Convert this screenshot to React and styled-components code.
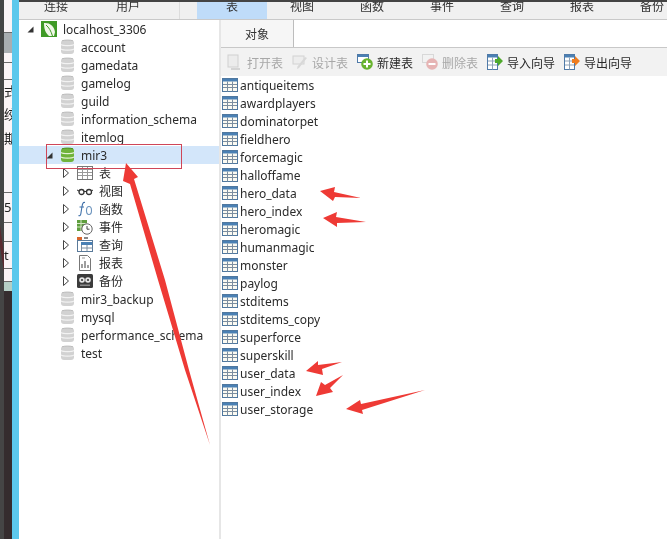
import React from 'react';
import styled, { createGlobalStyle } from 'styled-components';

const GlobalStyle = createGlobalStyle`
  html, body {
    margin: 0;
    padding: 0;
    background: #fff;
  }
  body {
    font-family: "Noto Sans", "Noto Sans CJK SC", sans-serif;
    font-size: 12px;
    color: #222;
  }
`;

/* the source is a soft, compressed screenshot */
const Page = styled.div`
  position: relative;
  display: flex;
  width: 667px;
  height: 539px;
  overflow: hidden;
  background: #fff;
  filter: blur(0.3px);
`;

const DarkEdge = styled.div`
  width: 4px;
  background: #454545;
`;

const BehindWindow = styled.div`
  display: flex;
  flex-direction: column;
  width: 8px;
  overflow: hidden;
  background: #fbf4f6;
`;

const BehindRow = styled.div`
  flex: ${p => (p.$fill ? 1 : 'none')};
  height: ${p => (p.$h ? `${p.$h}px` : 'auto')};
  background: ${p => p.$bg || 'transparent'};
  border-bottom: ${p => (p.$line ? '1px solid #6a6a6a' : 'none')};
  font-size: 13px;
  line-height: ${p => (p.$h ? `${p.$h}px` : 'normal')};
  white-space: nowrap;
  color: #222;
`;

const BlueEdge = styled.div`
  width: 7px;
  background: #5cc8ec;
`;

const Content = styled.div`
  flex: 1;
  display: flex;
  flex-direction: column;
  min-width: 0;
`;

const TopStrip = styled.div`
  height: 2px;
  background: #444;
`;

const MenuBar = styled.div`
  display: flex;
  height: 18px;
  overflow: hidden;
  background: #f0f0f0;
  border-bottom: 1px solid #c9c9c9;
  box-sizing: border-box;
`;

const MenuButton = styled.div`
  width: ${p => p.$w || 70}px;
  flex: none;
  text-align: center;
  line-height: 8px;
  font-family: "Noto Sans CJK SC", sans-serif;
  color: #333;
  background: ${p => (p.$active ? '#bfdcf9' : 'transparent')};
`;

const MenuGap = styled.div`
  width: 17px;
  flex: none;
  margin-right: 17px;
  border-right: 1px solid #dcdcdc;
  box-sizing: border-box;
`;

const Body = styled.div`
  flex: 1;
  display: flex;
  min-height: 0;
`;

const Tree = styled.div`
  width: 200px;
  flex: none;
`;

const TreeRow = styled.div`
  display: flex;
  align-items: center;
  height: 18px;
  padding-left: ${p => p.$pad}px;
  background: ${p => (p.$selected ? '#d3e6fa' : 'transparent')};
  font-family: "Noto Sans", "Noto Sans CJK SC", sans-serif;
  font-size: 12px;
  color: #2b2b2b;
  white-space: nowrap;
`;

const Twisty = styled.span`
  display: flex;
  align-items: center;
  width: 14px;
  flex: none;
`;

const RowLabel = styled.span`
  margin-left: 6px;
`;

const Divider = styled.div`
  width: 2px;
  flex: none;
  background: #e6e6e6;
`;

const RightPane = styled.div`
  flex: 1;
  display: flex;
  flex-direction: column;
  min-width: 0;
`;

const TabStrip = styled.div`
  display: flex;
  height: 28px;
  flex: none;
  box-sizing: border-box;
  border-bottom: 1px solid #c8c8c8;
`;

const Tab = styled.div`
  width: 72px;
  display: flex;
  align-items: center;
  justify-content: center;
  background: #f6f6f6;
  border-right: 1px solid #bdbdbd;
  font-family: "Noto Sans CJK SC", sans-serif;
  color: #333;
`;

const ToolBar = styled.div`
  display: flex;
  align-items: center;
  height: 28px;
  flex: none;
  padding-left: 5px;
  background: #f2f2f2;
`;

const ToolButton = styled.div`
  display: flex;
  align-items: center;
  gap: ${p => p.$gap || 4}px;
  margin-right: 9px;
  font-family: "Noto Sans CJK SC", sans-serif;
  color: ${p => (p.$disabled ? '#a8a8a8' : '#2a2a2a')};
  white-space: nowrap;
`;

const TableList = styled.div`
  display: flex;
  flex-direction: column;
`;

const TableRow = styled.div`
  display: flex;
  align-items: center;
  gap: 2px;
  height: 18px;
  padding-left: 1px;
  color: #2b2b2b;
  white-space: nowrap;
`;

const Annotations = styled.svg`
  position: absolute;
  left: 0;
  top: 0;
  pointer-events: none;
`;

const HighlightBox = styled.div`
  position: absolute;
  left: 46px;
  top: 144px;
  width: 134px;
  height: 23px;
  border: 1px solid #cf4658;
`;

const DbIcon = ({ green }) => {
  const c = green ? '#6fb33a' : '#d2d2d2';
  const d = green ? '#4c8c24' : '#bdbdbd';
  return (
    <svg width="15" height="16" viewBox="0 0 15 16">
      <rect x="1" y="1" width="13" height="14" rx="3" fill={c} />
      <path d="M1 5.5c2 1.4 11 1.4 13 0M1 10c2 1.4 11 1.4 13 0" stroke={green ? '#e4f2d4' : '#f2f2f2'} strokeWidth="1.3" fill="none" />
      <path d="M2 1.8c3-1 8-1 11 0" stroke={d} fill="none" />
    </svg>
  );
};

const ServerIcon = () => (
  <svg width="16" height="16" viewBox="0 0 16 16">
    <rect width="16" height="16" fill="#3f9a26" />
    <path d="M3 2c6-.5 10 3 11 9l-1 4H8C4.5 12 3 8 3 2z" fill="#f1f7e8" />
    <path d="M5 4c3 2.5 5 6 6.500 11" stroke="#3f9a26" fill="none" />
  </svg>
);

const TableIcon = () => (
  <svg width="16" height="16" viewBox="0 0 16 16">
    <rect x=".5" y="1.5" width="15" height="13" fill="#fbfaf2" stroke="#50789f" />
    <rect x="1" y="2" width="14" height="2.5" fill="#4a80b4" />
    <path d="M1 7.5h14M1 10.5h14M5.5 4.5v10M10.5 4.5v10" stroke="#7c8ea0" fill="none" />
  </svg>
);

const GridIcon = () => (
  <svg width="16" height="16" viewBox="0 0 16 16">
    <rect x=".5" y="1.5" width="15" height="13" fill="#fff" stroke="#777" />
    <path d="M1 4.5h14M1 7.5h14M1 10.5h14M5.5 2v12M10.5 2v12" stroke="#999" fill="none" />
  </svg>
);

const GlassesIcon = () => (
  <svg width="16" height="16" viewBox="0 0 16 16">
    <circle cx="4.500" cy="9" r="2.500" fill="none" stroke="#333" strokeWidth="1.3" />
    <circle cx="12" cy="9" r="2.500" fill="none" stroke="#333" strokeWidth="1.3" />
    <path d="M7 8.500h2.500M2 8L0 7M14.500 8L16 7" stroke="#333" />
  </svg>
);

const FunctionIcon = () => (
  <svg width="16" height="16" viewBox="0 0 16 16">
    <path d="M8 1.500C6 1 5.500 2.500 5 5.500L3.800 13c-.3 1.500-1.200 2-2.300 1.500M2.500 6H7" stroke="#3d6fa8" strokeWidth="1.1" fill="none" />
    <ellipse cx="12" cy="9.500" rx="2.500" ry="4" fill="none" stroke="#6b93bd" strokeWidth="1.1" />
  </svg>
);

const EventIcon = () => (
  <svg width="16" height="16" viewBox="0 0 16 16">
    <rect x="0" y="1" width="10" height="11" fill="#5f9e3e" />
    <path d="M0 4.500h10M0 8h10M4 1v11" stroke="#d7e8c8" fill="none" />
    <circle cx="10" cy="10" r="5.200" fill="#fff" stroke="#666" />
    <path d="M10 7v3.200h2.500" stroke="#444" fill="none" />
  </svg>
);

const QueryIcon = () => (
  <svg width="16" height="16" viewBox="0 0 16 16">
    <rect x=".5" y="3.5" width="15" height="11" fill="#fff" stroke="#5a7a9a" />
    <rect x="4" y="5" width="11" height="3" fill="#4a80b4" />
    <path d="M4.500 8v6M10 8v6M4.500 11h11" stroke="#7c8ea0" fill="none" />
    <rect x="0" y="0" width="5" height="3" fill="#d9662b" />
    <rect x="7" y="0" width="4" height="2" fill="#888" />
  </svg>
);

const ReportIcon = () => (
  <svg width="16" height="16" viewBox="0 0 16 16">
    <path d="M2.500.5h8l3 3v12h-11z" fill="#fff" stroke="#777" />
    <path d="M5 13V9M8 13V6M11 13v-3" stroke="#777" strokeWidth="1.4" />
    <path d="M5 3h3" stroke="#999" />
  </svg>
);

const BackupIcon = () => (
  <svg width="16" height="16" viewBox="0 0 16 16">
    <rect x="0" y="1" width="16" height="14" rx="1.500" fill="#3b3b3b" />
    <circle cx="5" cy="7" r="2.800" fill="#e6e6e6" />
    <circle cx="11" cy="7" r="2.800" fill="#e6e6e6" />
    <circle cx="5" cy="7" r="1.100" fill="#3b3b3b" />
    <circle cx="11" cy="7" r="1.100" fill="#3b3b3b" />
    <rect x="3" y="11.500" width="10" height="1.500" fill="#8a8a8a" />
  </svg>
);

const OpenIcon = () => (
  <svg width="16" height="16" viewBox="0 0 16 16">
    <rect x="2" y="1" width="10" height="12" fill="#ececec" stroke="#d0d0d0" />
    <path d="M5 15h9" stroke="#d4d4d4" strokeWidth="2" />
  </svg>
);

const DesignIcon = () => (
  <svg width="16" height="16" viewBox="0 0 16 16">
    <rect x="1" y="2" width="11" height="8" fill="#ededed" stroke="#d2d2d2" />
    <path d="M15 4L7 14l-2 1 .5-2.500L13 3z" fill="#d8d8d8" />
  </svg>
);

const NewIcon = () => (
  <svg width="16" height="16" viewBox="0 0 16 16">
    <rect x=".5" y=".5" width="11" height="8" fill="#fff" stroke="#4f7aa8" />
    <rect x="1" y="1" width="10" height="2" fill="#4a80b4" />
    <circle cx="10" cy="10" r="5.800" fill="#68b32e" />
    <path d="M10 6.500v7M6.500 10h7" stroke="#fff" strokeWidth="2" />
  </svg>
);

const RemoveIcon = () => (
  <svg width="16" height="16" viewBox="0 0 16 16">
    <rect x=".5" y=".5" width="11" height="8" fill="#f2f2f2" stroke="#d8d8d8" />
    <circle cx="10" cy="10" r="5.800" fill="#e6b4b4" />
    <path d="M6.500 10h7" stroke="#fff" strokeWidth="2" />
  </svg>
);

const WizardIcon = ({ color }) => (
  <svg width="16" height="18" viewBox="0 0 16 18">
    <rect x=".5" y="1.500" width="10" height="15" fill="#fff" stroke="#4f7aa8" />
    <rect x="1" y="2" width="9" height="2.500" fill="#4a80b4" />
    <path d="M1 8h9M1 12h9M5.500 4.500v12" stroke="#8fa3b8" fill="none" />
    <path d="M8 6h3V3l5 5-5 5v-3H8z" fill={color} />
  </svg>
);

const TriangleOpen = () => (
  <svg width="7" height="7" viewBox="0 0 7 7">
    <path d="M6.500.5v6h-6z" fill="#333" />
  </svg>
);

const TriangleClosed = () => (
  <svg width="6" height="10" viewBox="0 0 6 10">
    <path d="M.5.5l5 4.500-5 4.500z" fill="#fff" stroke="#444" />
  </svg>
);

const databasesTop = ['account', 'gamedata', 'gamelog', 'guild', 'information_schema', 'itemlog'];
const databasesBottom = ['mir3_backup', 'mysql', 'performance_schema', 'test'];

const children = [
  ['表', <GridIcon />],
  ['视图', <GlassesIcon />],
  ['函数', <FunctionIcon />],
  ['事件', <EventIcon />],
  ['查询', <QueryIcon />],
  ['报表', <ReportIcon />],
  ['备份', <BackupIcon />],
];

const tables = [
  'antiqueitems', 'awardplayers', 'dominatorpet', 'fieldhero', 'forcemagic', 'halloffame',
  'hero_data', 'hero_index', 'heromagic', 'humanmagic', 'monster', 'paylog', 'stditems',
  'stditems_copy', 'superforce', 'superskill', 'user_data', 'user_index', 'user_storage',
];

const arrows = [
  '126,163 138,177 134,179 165,280 189,370 210,445 185,370 158,280 130,184 123,181',
  '320,191 335,187 334,192 361,198 335,197 333,201',
  '323,218 337,212 336,217 366,222 337,223 337,227',
  '306,371 318,361 318,365 342,362 322,369 323,375',
  '316,396 321,382 325,385 343,375 330,388 333,392',
  '346,409 360,400 361,404 425,390 362,410 363,414',
];

const App = () => (
  <Page>
    <GlobalStyle />
    <DarkEdge />
    <BehindWindow>
      <BehindRow $h={32} $line />
      <BehindRow $h={20} $bg="#a9adb0" />
      <BehindRow $h={9} $line />
      <BehindRow $h={16} $line />
      <BehindRow $h={22}>式</BehindRow>
      <BehindRow $h={24}>绞</BehindRow>
      <BehindRow $h={24}>期</BehindRow>
      <BehindRow $h={42} $line />
      <BehindRow $h={29} $line>5(</BehindRow>
      <BehindRow $h={18} $line />
      <BehindRow $h={26} $line>t</BehindRow>
      <BehindRow $h={12} $line />
      <BehindRow $h={9} $bg="#b5cfc6" />
      <BehindRow $fill $bg="#352c2e" />
    </BehindWindow>
    <BlueEdge />
    <Content>
      <TopStrip />
      <MenuBar>
        <MenuButton $w={74}>连接</MenuButton>
        <MenuButton>用户</MenuButton>
        <MenuGap />
        <MenuButton $active>表</MenuButton>
        <MenuButton>视图</MenuButton>
        <MenuButton>函数</MenuButton>
        <MenuButton>事件</MenuButton>
        <MenuButton>查询</MenuButton>
        <MenuButton>报表</MenuButton>
        <MenuButton>备份</MenuButton>
      </MenuBar>
      <Body>
        <Tree>
          <TreeRow $pad={8}>
            <Twisty><TriangleOpen /></Twisty>
            <ServerIcon />
            <RowLabel>localhost_3306</RowLabel>
          </TreeRow>
          {databasesTop.map(name => (
            <TreeRow $pad={27} key={name}>
              <Twisty />
              <DbIcon />
              <RowLabel>{name}</RowLabel>
            </TreeRow>
          ))}
          <TreeRow $pad={27} $selected>
            <Twisty><TriangleOpen /></Twisty>
            <DbIcon green />
            <RowLabel>mir3</RowLabel>
          </TreeRow>
          {children.map(([label, icon]) => (
            <TreeRow $pad={44} key={label}>
              <Twisty><TriangleClosed /></Twisty>
              {icon}
              <RowLabel>{label}</RowLabel>
            </TreeRow>
          ))}
          {databasesBottom.map(name => (
            <TreeRow $pad={27} key={name}>
              <Twisty />
              <DbIcon />
              <RowLabel>{name}</RowLabel>
            </TreeRow>
          ))}
        </Tree>
        <Divider />
        <RightPane>
          <TabStrip>
            <Tab>对象</Tab>
          </TabStrip>
          <ToolBar>
            <ToolButton $disabled $gap={5}><OpenIcon />打开表</ToolButton>
            <ToolButton $disabled><DesignIcon />设计表</ToolButton>
            <ToolButton><NewIcon />新建表</ToolButton>
            <ToolButton $disabled><RemoveIcon />删除表</ToolButton>
            <ToolButton><WizardIcon color="#4faa2c" />导入向导</ToolButton>
            <ToolButton><WizardIcon color="#ef7d1f" />导出向导</ToolButton>
          </ToolBar>
          <TableList>
            {tables.map(name => (
              <TableRow key={name}>
                <TableIcon />
                {name}
              </TableRow>
            ))}
          </TableList>
        </RightPane>
      </Body>
    </Content>
    <HighlightBox />
    <Annotations width="667" height="539" viewBox="0 0 667 539">
      <polygon points="0,225 4,255 4,272 0,246" fill="#5a2a30" />
      {arrows.map(points => (
        <polygon key={points} points={points} fill="#ee3a35" />
      ))}
    </Annotations>
  </Page>
);

export default App;
